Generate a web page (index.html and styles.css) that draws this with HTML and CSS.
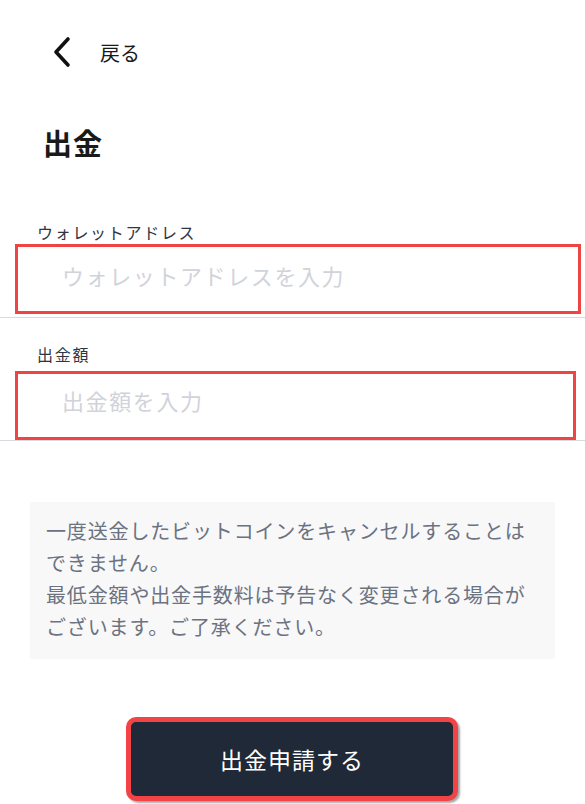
FILE: index.html
```html
<!DOCTYPE html>
<html lang="ja">
<head>
<meta charset="utf-8">
<link rel="stylesheet" href="styles.css">
</head>
<body>
<div class="page">
  <header class="topbar">
    <svg class="back-icon" width="22" height="32" viewBox="0 0 22 32">
      <path d="M17 3 L5 16 L17 29" fill="none" stroke="#111" stroke-width="3.6" stroke-linecap="round" stroke-linejoin="round"/>
    </svg>
    <span class="back-text">戻る</span>
  </header>
  <h1 class="title">出金</h1>

  <div class="field field-1">
    <label class="field-label">ウォレットアドレス</label>
    <div class="input-box box-1"><span class="placeholder">ウォレットアドレスを入力</span></div>
    <div class="rule"></div>
  </div>

  <div class="field field-2">
    <label class="field-label">出金額</label>
    <div class="input-box box-2"><span class="placeholder">出金額を入力</span></div>
    <div class="rule"></div>
  </div>

  <div class="notice">
    <p>一度送金したビットコインをキャンセルすることはできません。</p>
    <p>最低金額や出金手数料は予告なく変更される場合がございます。ご了承ください。</p>
  </div>

  <div class="actions">
    <button class="submit">出金申請する</button>
  </div>
</div>
</body>
</html>
```

FILE: styles.css
```css
* { box-sizing: border-box; }
html, body {
  margin: 0;
  padding: 0;
  background: #ffffff;
  font-family: "Noto Sans CJK JP", "Noto Sans", sans-serif;
  color: #1f2937;
}
.page {
  width: 585px;
  height: 804px;
  overflow: hidden;
}
.topbar {
  display: flex;
  align-items: center;
  height: 104px;
  padding-left: 51px;
}
.back-icon { display: block; }
.back-text {
  margin-left: 27px;
  font-size: 20px;
  color: #1a1a1a;
}
.title {
  margin: 0;
  padding-top: 18px;
  padding-left: 43px;
  font-size: 29px;
  font-weight: 700;
  line-height: 40px;
  color: #1a1a1a;
  letter-spacing: 1px;
}
.field { display: flex; flex-direction: column; }
.field-1 { margin-top: 58px; }
.field-2 { margin-top: 24px; }
.field-label {
  padding-left: 37px;
  font-size: 16px;
  letter-spacing: 1.7px;
  line-height: 24px;
  color: #2f3542;
}
.input-box {
  margin-left: 15px;
  height: 70px;
  border: 3px solid #ef4444;
  display: flex;
  align-items: center;
  padding-left: 44px;
  padding-bottom: 8px;
}
.box-1 { width: 566px; margin-top: 0; }
.box-2 { width: 561px; margin-top: 5px; height: 69px; padding-bottom: 11px; }
.placeholder {
  font-size: 22px;
  letter-spacing: 1.6px;
  color: #d1d3da;
}
.rule {
  height: 1px;
  background: #d6d9de;
}
.field-1 .rule { margin-top: 3px; }
.field-2 .rule { margin-top: 0; }
.notice {
  margin: 61px 30px 0 30px;
  height: 157px;
  background: #f8f8f9;
  padding: 13px 16px 0 16px;
  color: #6b7280;
  font-size: 20px;
  letter-spacing: 0.85px;
  line-height: 32px;
}
.notice p { margin: 0; }
.actions {
  display: flex;
  justify-content: center;
  margin-top: 58px;
  padding-right: 1px;
}
.submit {
  width: 332px;
  height: 84px;
  background: #1f2937;
  border: 5px solid #f24346;
  border-radius: 10px;
  color: #ffffff;
  font-family: "Noto Sans CJK JP", sans-serif;
  font-size: 23px;
  letter-spacing: 1px;
  box-shadow: 2px 2px 2px rgba(0,0,0,0.35);
}
```
